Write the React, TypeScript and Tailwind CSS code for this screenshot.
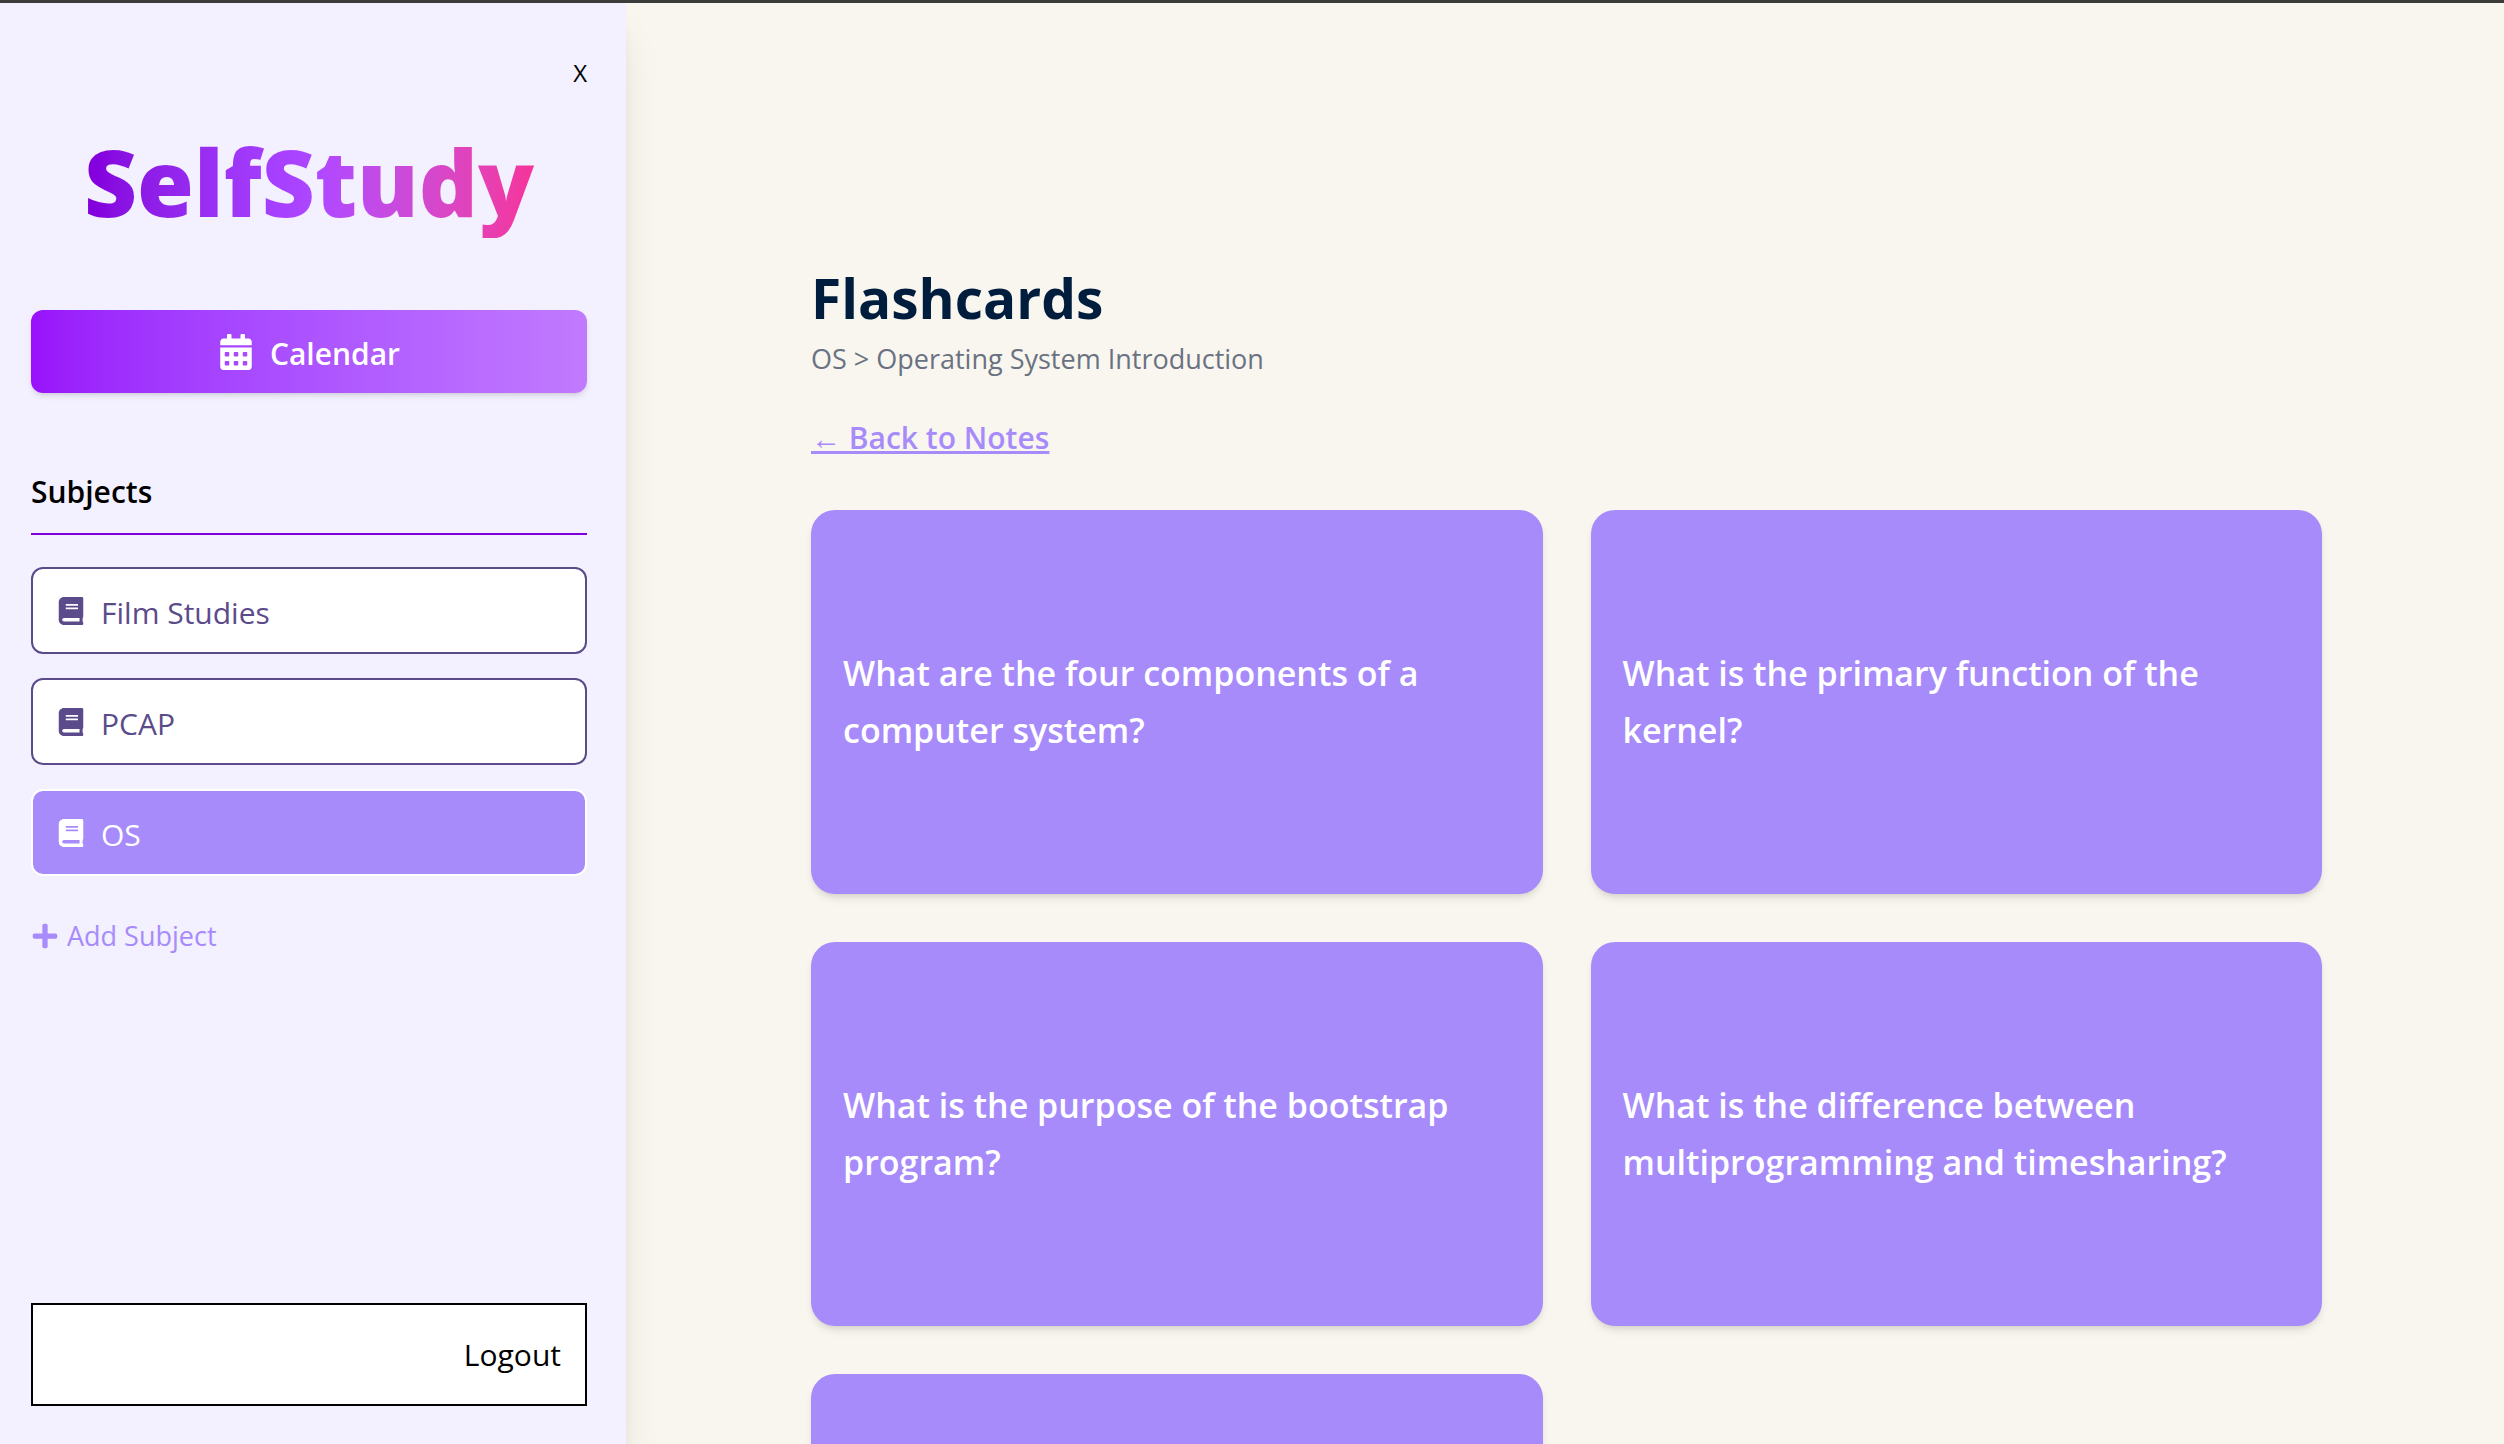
import { FaBook, FaCalendarAlt, FaPlus } from "react-icons/fa";

const subjects = [
  { name: "Film Studies", active: false },
  { name: "PCAP", active: false },
  { name: "OS", active: true },
];

const questions = [
  "What are the four components of a computer system?",
  "What is the primary function of the kernel?",
  "What is the purpose of the bootstrap program?",
  "What is the difference between multiprogramming and timesharing?",
  "",
];

function Sidebar() {
  return (
    <aside className="relative z-10 flex w-1/4 shrink-0 flex-col bg-[#f3f0ff] pt-[54px] pr-[39px] pb-[38px] pl-[31px] shadow-[0_32px_40px_-6px_rgba(0,0,0,0.1),0_13px_16px_-8px_rgba(0,0,0,0.1)]">
      <button type="button" aria-label="Close sidebar" className="self-end text-[24px] leading-8 text-black">
        X
      </button>
      <h1 className="mt-[45px] self-center bg-linear-to-r from-purple-700 via-purple-500 to-pink-500 bg-clip-text pb-2 text-[92px] leading-[96px] font-black text-transparent">
        SelfStudy
      </h1>
      <button
        type="button"
        className="mt-[72px] flex h-[83px] items-center justify-center gap-4 rounded-xl bg-linear-to-r from-purple-600 to-purple-400 text-[30px] font-semibold text-white shadow-md"
      >
        <FaCalendarAlt className="size-9" />
        <span className="pt-1">Calendar</span>
      </button>
      <h2 className="mt-[76px] border-b-2 border-purple-700 pb-[19px] text-[30px] leading-[45px] font-semibold text-black">
        Subjects
      </h2>
      <ul className="mt-8 flex flex-col gap-6">
        {subjects.map((s) => (
          <li key={s.name}>
            <button
              type="button"
              className={
                s.active
                  ? "flex h-[87px] w-full items-center gap-4 rounded-xl border-2 border-white bg-[#a78bfa] px-6 text-[30px] text-white"
                  : "flex h-[87px] w-full items-center gap-4 rounded-xl border-2 border-[#5b4b8a] bg-white px-6 text-[30px] text-[#5b4b8a]"
              }
            >
              <FaBook className="size-7" />
              <span className="pt-1">{s.name}</span>
            </button>
          </li>
        ))}
      </ul>
      <button type="button" className="mt-10 flex items-center gap-2 self-start text-[27px] leading-10 text-[#a78bfa]">
        <FaPlus className="size-7" />
        Add Subject
      </button>
      <button type="button" className="mt-auto h-[103px] border-2 border-black bg-white px-6 text-right text-[30px] text-black">
        Logout
      </button>
    </aside>
  );
}

function Flashcards() {
  return (
    <main className="min-w-0 flex-1 overflow-hidden pt-[259px] pr-[182px] pl-[185px]">
      <h1 className="text-[55px] leading-[72px] font-bold text-[#001d3d]">Flashcards</h1>
      <p className="text-[27px] leading-[50px] text-gray-500">OS &gt; Operating System Introduction</p>
      <a href="#notes" className="mt-[30px] inline-block text-[30px] leading-12 font-semibold text-[#a78bfa] underline">
        ← Back to Notes
      </a>
      <div className="mt-12 grid grid-cols-2 gap-12">
        {questions.map((q, i) => (
          <button
            type="button"
            key={i}
            aria-label={q || "Flashcard"}
            className="flex h-96 items-center rounded-3xl bg-[#a78bfa] px-8 text-left text-[34px] leading-[57px] font-semibold text-white shadow-[0_6px_10px_-2px_rgba(0,0,0,0.1),0_3px_6px_-3px_rgba(0,0,0,0.1)]"
          >
            {q}
          </button>
        ))}
      </div>
    </main>
  );
}

export default function App() {
  return (
    <div className="flex h-screen overflow-hidden border-t-[3px] border-[#3c3c3a] bg-[#f9f6ef] font-['Open_Sans',sans-serif]">
      <Sidebar />
      <Flashcards />
    </div>
  );
}
